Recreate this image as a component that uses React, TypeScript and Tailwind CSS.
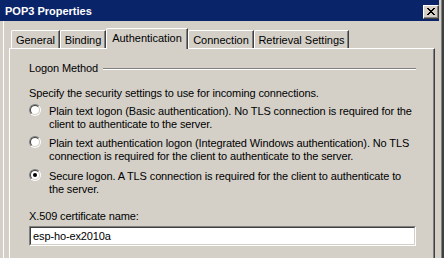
import React from "react";

function Radio({ checked }: { checked?: boolean }) {
  return (
    <span className="mt-[-1px] flex h-[12px] w-[12px] shrink-0 rounded-full border border-t-[#808080] border-l-[#808080] border-b-white border-r-white">
      <span className="flex h-[10px] w-[10px] items-center justify-center rounded-full border border-t-[#404040] border-l-[#404040] border-b-[#d4d0c8] border-r-[#d4d0c8] bg-white">
        {checked && <span className="h-[4px] w-[4px] rounded-full bg-black" />}
      </span>
    </span>
  );
}

function Option({ checked, l1, l2, className }: { checked?: boolean; l1: string; l2: string; className: string }) {
  return (
    <div className={"flex items-start " + className}>
      <Radio checked={checked} />
      <div className="ml-[8px] whitespace-nowrap leading-[13px]">
        <div>{l1}</div>
        <div>{l2}</div>
      </div>
    </div>
  );
}

function Tab({ label, w, selected }: { label: string; w: string; selected?: boolean }) {
  if (selected) {
    return (
      <div
        className={
          "relative z-10 mb-[-1px] flex h-[21px] items-start justify-center rounded-tl-[2px] border-l border-t border-r border-l-white border-t-white border-r-[#404040] bg-[#d4d0c8] pt-[3px] shadow-[inset_-1px_0_0_#808080] " +
          w
        }
      >
        {label}
      </div>
    );
  }
  return (
    <div
      className={
        "flex h-[18px] items-start justify-center rounded-tl-[2px] border-l border-t border-r border-l-white border-t-white border-r-[#404040] pt-[3px] shadow-[inset_-1px_0_0_#808080] " +
        w
      }
    >
      {label}
    </div>
  );
}

export default function App() {
  return (
    <div className="flex h-[258px] w-[444px] overflow-hidden bg-[#d4d0c8] font-['Liberation_Sans',Arial,sans-serif] text-[11px] leading-[13px] text-black">
      <div className="flex min-w-0 flex-1 flex-col">
        <div className="flex h-[21px] shrink-0 items-start justify-between bg-[#0a246a]">
          <div className="pl-[5px] pt-[5px] text-[11px] font-bold leading-[13px] text-white">POP3 Properties</div>
          <div className="mt-[5px] flex h-[14px] w-[16px] border border-t-white border-l-white border-b-[#404040] border-r-[#404040] bg-[#d4d0c8] shadow-[inset_-1px_-1px_0_#808080]">
            <svg width="8" height="7" viewBox="0 0 8 7" className="ml-[3px] mt-[2px]" shapeRendering="crispEdges">
              <path
                d="M0 0h2v1H0zM6 0h2v1H6zM1 1h2v1H1zM5 1h2v1H5zM2 2h4v1H2zM3 3h2v1H3zM2 4h4v1H2zM1 5h2v1H1zM5 5h2v1H5zM0 6h2v1H0zM6 6h2v1H6z"
                fill="#000"
              />
            </svg>
          </div>
        </div>
        <div className="flex flex-1">
          <div className="w-[3px]" />
          <div className="w-px bg-white" />
          <div className="flex flex-1 flex-col pl-[5px] pr-[4px]">
            <div className="flex h-[27px] shrink-0 items-end pl-[2px]">
              <Tab label="General" w="w-[49px]" />
              <Tab label="Binding" w="w-[46px]" />
              <Tab label="Authentication" w="w-[82px]" selected />
              <Tab label="Connection" w="w-[66px]" />
              <Tab label="Retrieval Settings" w="w-[95px]" />
            </div>
            <div className="flex flex-1 flex-col border-l border-t border-r border-l-white border-t-white border-r-[#404040] pl-[19px] pr-[18px] pt-[13px] tracking-[-0.12px] shadow-[inset_-1px_0_0_#808080]">
              <div className="flex items-center">
                <span>Logon Method</span>
                <span className="ml-[5px] h-[2px] flex-1 border-t border-b border-t-[#808080] border-b-white" />
              </div>
              <div className="mt-[12px] whitespace-nowrap">Specify the security settings to use for incoming connections.</div>
              <Option
                className="mt-[5px]"
                l1="Plain text logon (Basic authentication). No TLS connection is required for the"
                l2="client to authenticate to the server."
              />
              <Option
                className="mt-[6px]"
                l1="Plain text authentication logon (Integrated Windows authentication). No TLS"
                l2="connection is required for the client to authenticate to the server."
              />
              <Option
                checked
                className="mt-[7px]"
                l1="Secure logon. A TLS connection is required for the client to authenticate to"
                l2="the server."
              />
              <div className="mt-[14px]">X.509 certificate name:</div>
              <div className="mt-[3px] flex h-[20px] border border-t-[#808080] border-l-[#808080] border-b-white border-r-white">
                <div className="flex flex-1 items-center border border-t-[#404040] border-l-[#404040] border-b-[#d4d0c8] border-r-[#d4d0c8] bg-white pl-[2px]">
                  esp-ho-ex2010a
                </div>
              </div>
            </div>
          </div>
        </div>
      </div>
      <div className="flex w-[5px] shrink-0">
        <div className="w-[2px]" />
        <div className="w-px bg-[#808080]" />
        <div className="w-[2px] bg-[#404040]" />
      </div>
    </div>
  );
}
